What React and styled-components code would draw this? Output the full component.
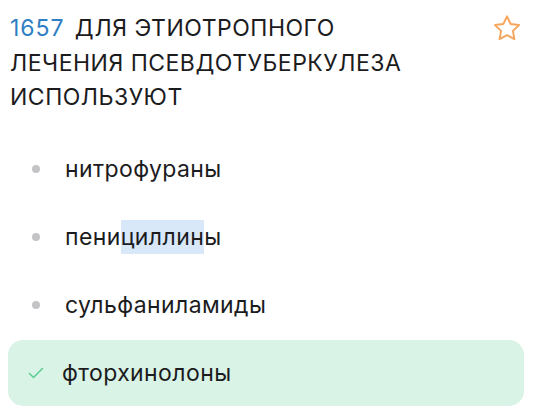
import React from 'react'
import styled, { createGlobalStyle, css } from 'styled-components'

const GlobalStyle = createGlobalStyle`
  body {
    margin: 0;
    background: #ffffff;
    font-family: Inter, "Noto Sans", sans-serif;
    color: #1c1c1e;
  }
`

const Card = styled.div`
  width: 534px;
  height: 420px;
  box-sizing: border-box;
  padding: 11px 10px 0 8px;
  overflow: hidden;
`

const Header = styled.div`
  display: flex;
  align-items: flex-start;
  justify-content: space-between;
  padding-left: 2px;
`

const Title = styled.h2`
  margin: 0;
  max-width: 405px;
  font-size: 23px;
  font-weight: 400;
  line-height: 34.5px;
  text-transform: uppercase;
  letter-spacing: 0.5px;
`

const Number = styled.span`
  color: #2f7fc4;
  margin-right: 10px;
  letter-spacing: 1px;
`

const StarButton = styled.button`
  border: 0;
  background: none;
  padding: 0;
  margin: 0;
  width: 34px;
  height: 34px;
  display: flex;
  align-items: center;
  justify-content: center;
  cursor: pointer;
`

const Options = styled.ul`
  list-style: none;
  margin: 20px 0 0;
  padding: 0;
`

const Option = styled.li`
  display: flex;
  align-items: center;
  height: 68px;
  padding-left: 24px;
  font-size: 23px;
  line-height: 34px;
  letter-spacing: 0.4px;
  ${props => props.correct && css`
    height: 66px;
    margin-top: 1px;
    padding-left: 20px;
    background: #d9f3e6;
    border-radius: 15px;
  `}
`

const Dot = styled.span`
  width: 8px;
  height: 8px;
  border-radius: 50%;
  background: #c4c4c6;
  margin-right: 25px;
  flex-shrink: 0;
`

const Check = styled.span`
  width: 16px;
  display: flex;
  margin-right: 18px;
  flex-shrink: 0;
`

const Highlight = styled.span`
  display: inline-block;
  background: #d8e8f8;
  line-height: 34px;
`

const Star = () => (
  <svg width="32" height="31" viewBox="0 0 24 24" fill="none" stroke="#f6a65c" strokeWidth="1.5" strokeLinejoin="round">
    <path d="M12 2.6l2.85 5.9 6.45.85-4.72 4.5 1.17 6.4L12 17.15l-5.75 3.1 1.17-6.4L2.7 9.35l6.45-.85z" />
  </svg>
)

const Tick = () => (
  <svg width="16" height="12" viewBox="0 0 16 12" fill="none" stroke="#5fcf98" strokeWidth="1.6" strokeLinecap="round" strokeLinejoin="round">
    <path d="M1.5 6.5l4 4 9-9" />
  </svg>
)

const answers = [
  { text: 'нитрофураны' },
  { text: 'пенициллины', mark: [4, 10] },
  { text: 'сульфаниламиды' },
  { text: 'фторхинолоны', correct: true },
]

const AnswerText = ({ text, mark }) => {
  if (!mark) return <span>{text}</span>
  return (
    <span>
      {text.slice(0, mark[0])}
      <Highlight>{text.slice(mark[0], mark[1])}</Highlight>
      {text.slice(mark[1])}
    </span>
  )
}

export default function App() {
  return (
    <Card>
      <GlobalStyle />
      <Header>
        <Title>
          <Number>1657</Number>
          Для этиотропного лечения псевдотуберкулеза используют
        </Title>
        <StarButton aria-label="В избранное">
          <Star />
        </StarButton>
      </Header>
      <Options>
        {answers.map((a, i) => (
          <Option key={i} correct={a.correct}>
            {a.correct ? <Check><Tick /></Check> : <Dot />}
            <AnswerText text={a.text} mark={a.mark} />
          </Option>
        ))}
      </Options>
    </Card>
  )
}
